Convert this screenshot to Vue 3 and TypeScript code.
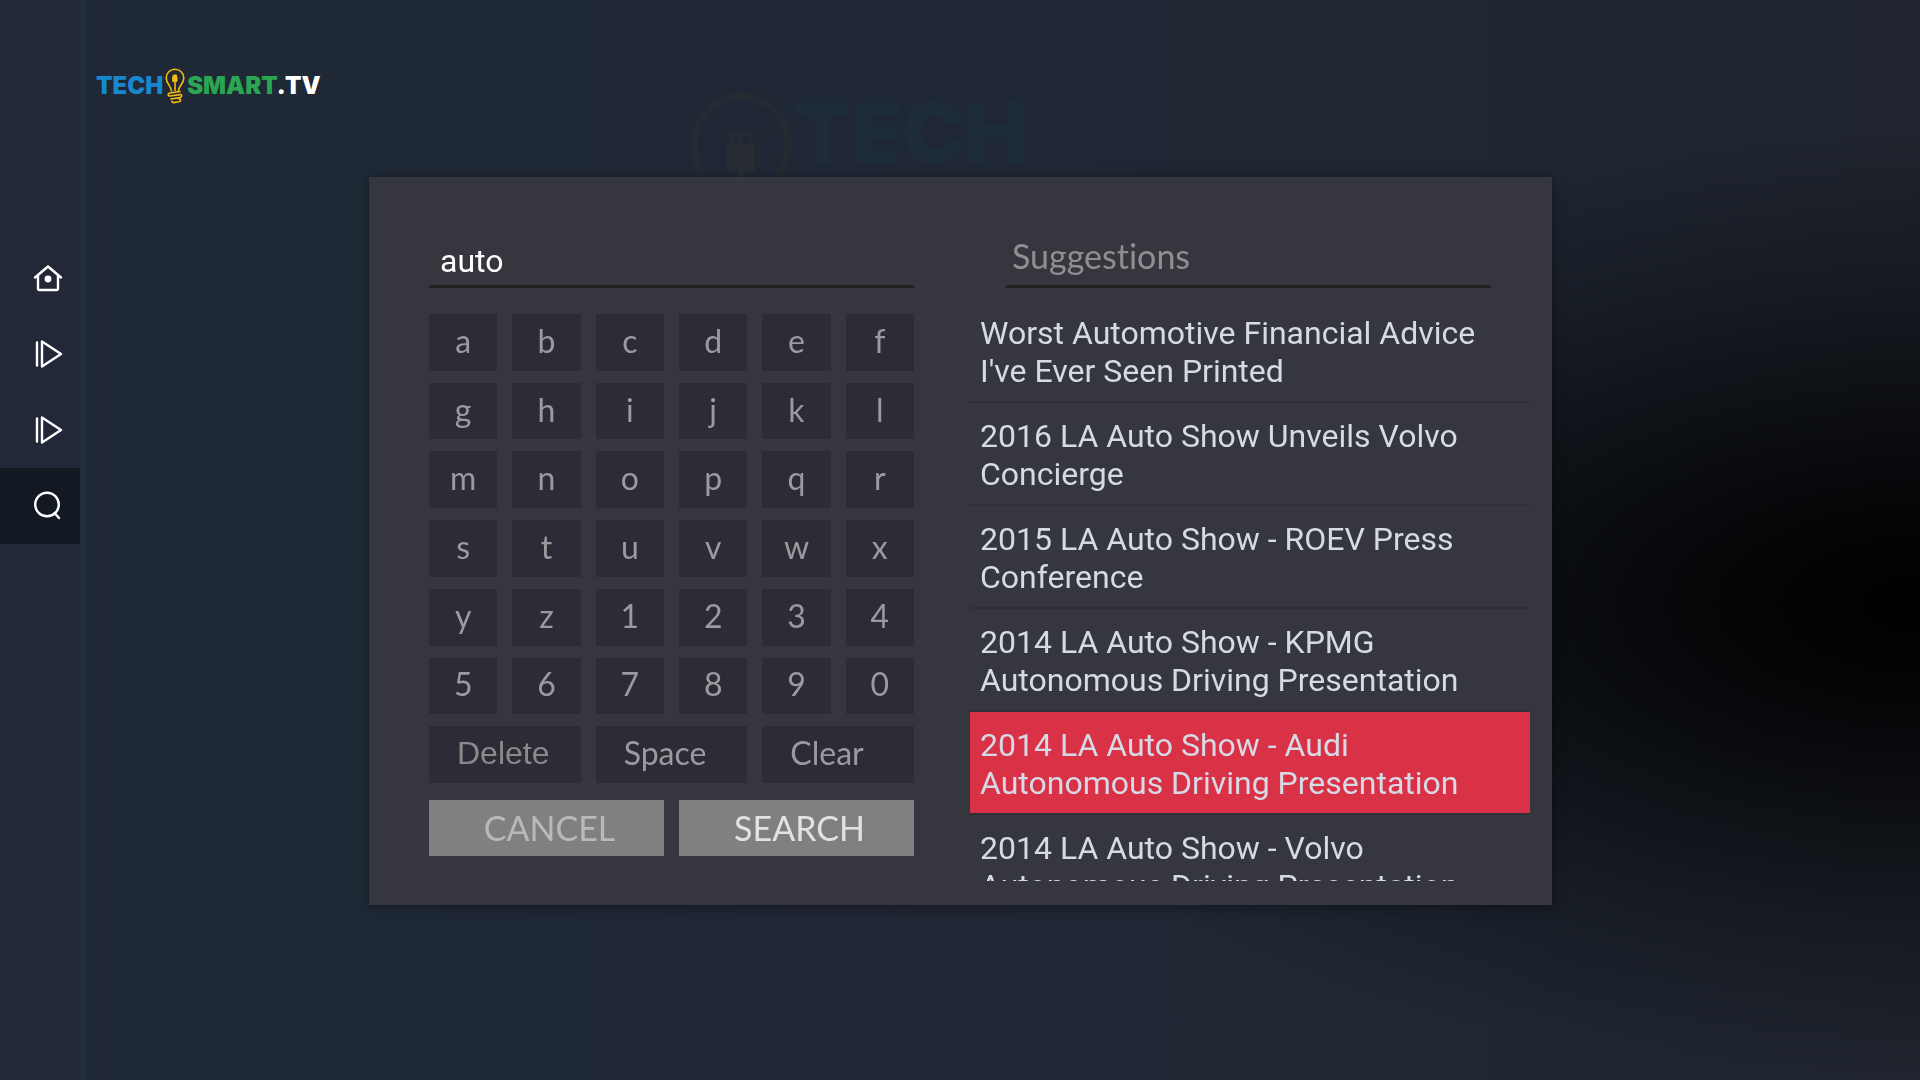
<script setup lang="ts">
import { ref } from 'vue'

const query = ref('auto')
const keys = 'abcdefghijklmnopqrstuvwxyz1234567890'.split('')
const suggestions = [
  "Worst Automotive Financial Advice I've Ever Seen Printed",
  '2016 LA Auto Show Unveils Volvo Concierge',
  '2015 LA Auto Show - ROEV Press Conference',
  '2014 LA Auto Show - KPMG Autonomous Driving Presentation',
  '2014 LA Auto Show - Audi Autonomous Driving Presentation',
  '2014 LA Auto Show - Volvo Autonomous Driving Presentation',
]
const selected = ref(4)

function press(key: string) {
  query.value += key
}
</script>

<template>
  <div class="screen">
    <nav class="sidebar" aria-label="Main">
      <a href="#home" class="nav-item" aria-label="Home">
        <svg viewBox="0 0 32 32" width="32" height="32" fill="none" stroke="#fff" stroke-width="2.4" stroke-linecap="round" stroke-linejoin="round">
          <path d="M3 15.500 16 4.500 29 15.500M6 14v12.500q0 1.500 1.500 1.500h17q1.500 0 1.500-1.500V14" />
          <circle cx="16" cy="17" r="3.400" fill="#fff" stroke="none" />
        </svg>
      </a>
      <a v-for="n in 2" :key="n" href="#videos" class="nav-item" aria-label="Videos">
        <svg viewBox="0 0 32 32" width="32" height="32" fill="none" stroke="#fff" stroke-width="2.4" stroke-linecap="round" stroke-linejoin="round">
          <path d="M5 4.500v23M10 3.500v25L29 16z" />
        </svg>
      </a>
      <a href="#search" class="nav-item active" aria-label="Search">
        <svg viewBox="0 0 32 32" width="32" height="32" fill="none" stroke="#fff" stroke-width="2.4" stroke-linecap="round">
          <circle cx="15" cy="14.500" r="11.800" />
          <path d="M22.500 23 27 28" />
        </svg>
      </a>
    </nav>

    <header class="top">
      <div class="logo">
        <span class="blue">TECH</span>
        <svg viewBox="0 0 20 36" width="20" height="36" fill="none" stroke="#f4bb10" stroke-width="1.6" stroke-linecap="round" stroke-linejoin="round">
          <path d="M6.500 23C6.500 18 1.200 16 1.200 10a8.800 8.800 0 0 1 17.600 0c0 6-5.300 8-5.300 12.500M10 13v9.500" />
          <path d="M15 23.500 5 25q-2 .5-1.800 2 .3 1.200 2 1l9.500-1.400q1.800-.4 2 1 0 1.600-1.800 2l-9 1.400M14 31q1.800 0 1.600 1.300-.2 1.200-1.800 1.500l-5 .8q-1.600 0-2-1.400" />
          <path d="M8 9h4v4.500H8zM8.500 7h3v2h-3z" fill="#f4bb10" stroke-width="1" />
        </svg>
        <span class="green">SMART<span class="white">.TV</span></span>
      </div>
      <div class="watermark" aria-hidden="true">
        <svg viewBox="0 0 104 130" width="104" height="130" fill="none" stroke="#242c33" stroke-width="7">
          <path d="M34 130C28 102 5.500 84 5.500 52a46.500 46.500 0 0 1 93 0c0 32-22 50-28 78" />
          <path d="M38 53h28v27H38zM49 78h6v50h-6z" fill="#272d33" stroke="none" />
          <path d="M42 53V42h20v11M52 42v11" stroke-width="3" />
        </svg>
        <span>TECH</span>
      </div>
    </header>

    <div class="overlay">
      <section class="dialog" role="dialog" aria-label="Search">
        <form class="entry" @submit.prevent>
          <input v-model="query" class="field" type="text" aria-label="Search text" />
          <div class="keys">
            <button v-for="k in keys" :key="k" type="button" class="key" @click="press(k)">{{ k }}</button>
            <button type="button" class="key wide delete" @click="query = query.slice(0, -1)">Delete</button>
            <button type="button" class="key wide" @click="press(' ')">Space</button>
            <button type="button" class="key wide" @click="query = ''">Clear</button>
          </div>
          <div class="actions">
            <button type="button" class="action">CANCEL</button>
            <button type="submit" class="action primary">SEARCH</button>
          </div>
        </form>

        <div class="results">
          <h2>Suggestions</h2>
          <ul>
            <li v-for="(s, i) in suggestions" :key="s">
              <button type="button" :class="{ selected: i === selected }" @click="selected = i">{{ s }}</button>
            </li>
          </ul>
        </div>
      </section>
    </div>
  </div>
</template>

<style>
body {
  background: #1f2733;
}
</style>

<style scoped>
* {
  box-sizing: border-box;
}
.screen {
  display: flex;
  min-height: 100vh;
  overflow: hidden;
  font-family: Roboto, sans-serif;
  background:
    radial-gradient(ellipse 52% 44% at 100% 56%, #000 0%, rgba(0, 0, 0, 0.88) 18%, rgba(0, 0, 0, 0.66) 37%, rgba(0, 0, 0, 0.28) 69%, rgba(0, 0, 0, 0) 100%),
    linear-gradient(90deg, #202835 0%, #1f2936 20%, #202735 45%, #1f2733 75%, #1f242e 100%);
}
.sidebar {
  width: 86px;
  flex: none;
  padding-top: 240px;
  background: #222838;
  border-right: 6px solid #232d39;
}
.nav-item {
  display: flex;
  align-items: center;
  justify-content: flex-end;
  height: 76px;
  padding-right: 16px;
}
.nav-item.active {
  background: #131922;
}
.top {
  flex: 1;
  display: flex;
  align-items: flex-start;
  justify-content: space-between;
  padding: 68px 892px 0 10px;
}
.logo {
  display: flex;
  align-items: center;
  height: 36px;
  font: 900 24px/36px Inter, sans-serif;
}
.logo svg {
  margin: 0 2px;
}
.blue {
  color: #1787cf;
}
.green {
  color: #2aa652;
}
.white {
  color: #fff;
}
.watermark {
  display: flex;
  height: 130px;
  margin-top: 23px;
  font: 900 84px/84px Inter, sans-serif;
  color: #1e2b3b;
}
.overlay {
  position: fixed;
  inset: 0;
  display: flex;
  align-items: center;
  padding: 2px 368px 0 369px;
}
.dialog {
  flex: 1;
  display: grid;
  grid-template-columns: 485fr 560fr;
  column-gap: 56px;
  padding: 60px 22px 24px 60px;
  background: #36363e;
  box-shadow: 0 2px 12px rgba(0, 0, 0, 0.4);
}
.field {
  display: block;
  width: 100%;
  height: 51px;
  padding: 0 11px;
  border: 0;
  border-bottom: 3px solid #202020;
  border-radius: 0;
  outline: 0;
  background: none;
  font: 32px/38px Roboto, sans-serif;
  color: #fff;
}
.keys {
  display: grid;
  grid-template-columns: repeat(6, 1fr);
  grid-auto-rows: 1fr;
  gap: 12px 15px;
  min-height: 469px;
  margin-top: 26px;
}
.key,
.action {
  border: 0;
  padding: 0 0 3px;
  background: #2c2b36;
  font: 32px/38px Lato, sans-serif;
  color: #9b9b9e;
}
.wide {
  grid-column: span 2;
  padding-left: 28px;
  text-align: left;
}
.delete {
  font-family: "Liberation Sans", sans-serif;
  color: #8a8a89;
}
.actions {
  display: grid;
  grid-template-columns: 1fr 1fr;
  gap: 15px;
  margin-top: 17px;
}
.action {
  height: 56px;
  padding: 0 0 0 6px;
  background: #808080;
  font-size: 34px;
  color: #b9b9b9;
}
.primary {
  color: #e2e2e2;
}
h2 {
  height: 51px;
  margin: 0 39px 0 36px;
  padding: 0 6px;
  border-bottom: 3px solid #202020;
  font: 34px/38px Lato, sans-serif;
  font-variant-ligatures: none;
  color: #8f8f91;
}
ul {
  height: 581px;
  margin: 12px 0 0;
  padding: 0;
  overflow: hidden;
  list-style: none;
}
li {
  border-bottom: 2px solid #302f38;
}
li button {
  display: block;
  width: 100%;
  padding: 14px 10px 11px;
  border: 0;
  background: none;
  font: 32px/38px Roboto, sans-serif;
  color: #d6dae6;
  text-align: left;
}
li .selected {
  background: #d93247;
}
</style>
